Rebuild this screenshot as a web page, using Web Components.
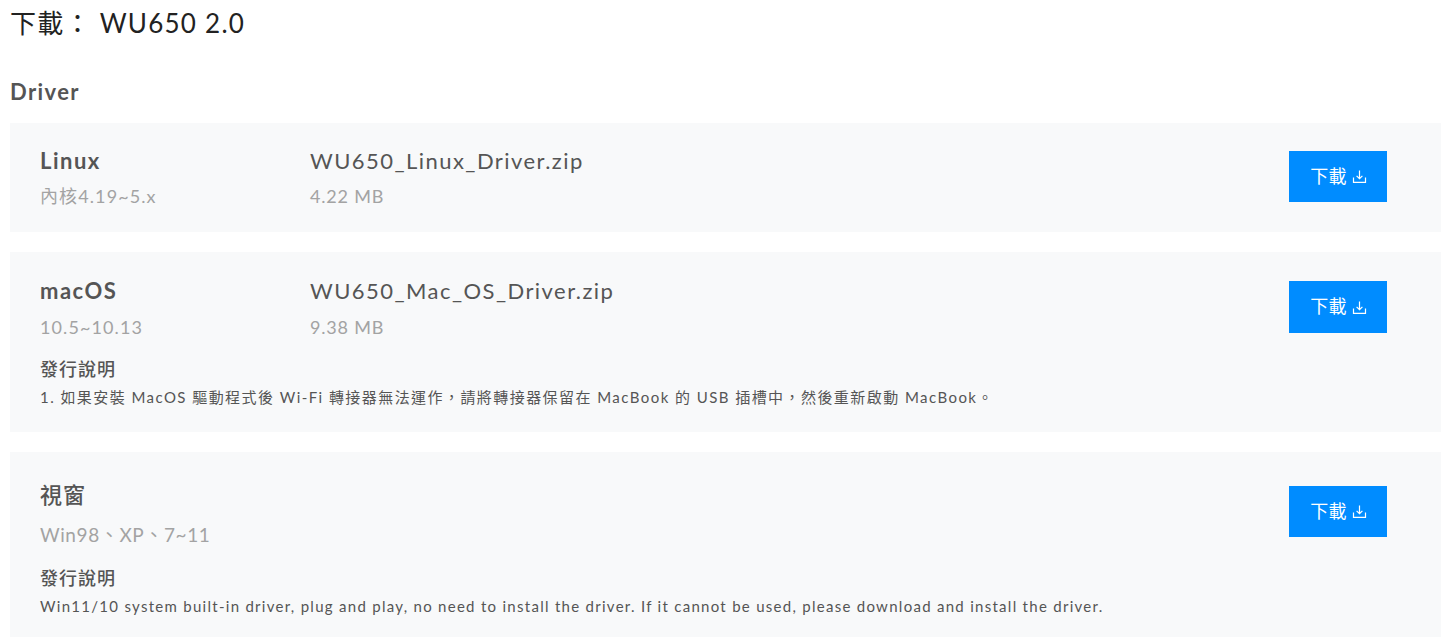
<!DOCTYPE html>
<html lang="zh-Hant">
<head>
<meta charset="utf-8">
<title>WU650 2.0</title>
<style>
    html, body { margin: 0; background: #fff; overflow: hidden; }
    body { font-family: Lato, "Noto Sans CJK TC", sans-serif; }
</style>
</head>
<body>
<download-page>
    <driver-card name="Linux" sub="內核4.19~5.x" file="WU650_Linux_Driver.zip" size="4.22 MB" style="--card-h:109px;--pad:27px;--btn-top:1px"></driver-card>
    <driver-card name="macOS" sub="10.5~10.13" file="WU650_Mac_OS_Driver.zip" size="9.38 MB" style="--card-h:180px;--btn-top:1px;--btn-h:52px;--sub-gap:15px;--note-ls:1.44px"
        note="1. 如果安裝 MacOS 驅動程式後 Wi-Fi 轉接器無法運作&#xFF0C;請將轉接器保留在 MacBook 的 USB 插槽中&#xFF0C;然後重新啟動 MacBook。"></driver-card>
    <driver-card name="視窗" sub="Win98、XP、7~11" style="--card-h:190px;--btn-top:6px;--note-gap:23px" big
        note="Win11/10 system built-in driver, plug and play, no need to install the driver. If it cannot be used, please download and install the driver."></driver-card>
</download-page>

<script>
class DownloadButton extends HTMLElement {
    constructor() {
        super();
        this.__shadowRoot = this.attachShadow({mode: 'open'});
    }

    connectedCallback() {
        this.__shadowRoot.innerHTML = `
        <style>
        :host { display: block; }
        a {
            display: flex;
            align-items: center;
            justify-content: center;
            gap: 5px;
            box-sizing: border-box;
            width: 98px;
            height: var(--btn-h, 51px);
            padding-left: 1px;
            background-color: #008cff;
            color: #fff;
            font-size: 18px;
            letter-spacing: .2px;
            text-decoration: none;
            cursor: pointer;
        }
        span { margin-bottom: 4px; }
        svg { width: 15px; height: 15px; }
        </style>
        <a href="#"><span>下載</span>
            <svg viewBox="0 0 15 15" fill="none" stroke="#fff" stroke-width="1.2">
                <path d="M7.5 1.5v8M4.6 6.8l2.9 2.9 2.9-2.9"/>
                <path d="M1.5 8.5v4.9h12V8.5"/>
            </svg>
        </a>
        `;
    }
}

class DriverCard extends HTMLElement {
    constructor() {
        super();
        this.__shadowRoot = this.attachShadow({mode: 'open'});
    }

    connectedCallback() {
        this.render();
    }

    render() {
        const attr = (key) => this.getAttribute(key);
        const file = attr('file') ? `
            <div class="file">
                <div class="file-name">${attr('file')}</div>
                <div class="sub">${attr('size')}</div>
            </div>` : '';
        const note = attr('note') ? `
            <div class="note">
                <div class="note-title">發行說明</div>
                <div class="note-text">${attr('note')}</div>
            </div>` : '';

        this.__shadowRoot.innerHTML = `
        <style>
        :host {
            display: block;
            box-sizing: border-box;
            height: var(--card-h);
            margin-bottom: 20px;
            padding: var(--pad, 28px) 54px 0 30px;
            background-color: #f8f9fa;
            color: #555;
        }
        .top { display: flex; align-items: flex-start; }
        .info { width: 270px; }
        .file { flex: 1; }
        .name { font-size: 22px; font-weight: 700; line-height: 22px; letter-spacing: 1.5px; }
        .sub { margin-top: var(--sub-gap, 14px); font-size: 18px; line-height: 20px; color: #a3a3a3; letter-spacing: 1.1px; }
        .file .sub { letter-spacing: .8px; }
        .file-name { font-size: 22px; line-height: 22px; letter-spacing: 1.45px; }
        download-button { margin: var(--btn-top, 0) 0 0 auto; }
        .note { margin-top: var(--note-gap, 22px); }
        .note-title { font-size: 18px; font-weight: 500; line-height: 20px; letter-spacing: 1px; }
        .note-text { margin-top: 8px; font-size: 15px; line-height: 20px; letter-spacing: var(--note-ls, 1.28px); white-space: nowrap; }
        :host([big]) .name { font-weight: 500; font-size: 22px; line-height: 30px; letter-spacing: 1px; }
        :host([big]) .sub { margin-top: 15px; font-size: 19px; letter-spacing: .6px; }
        </style>
        <div class="top">
            <div class="info">
                <div class="name">${attr('name')}</div>
                <div class="sub">${attr('sub')}</div>
            </div>
            ${file}
            <download-button></download-button>
        </div>
        ${note}
        `;
    }
}

class DownloadPage extends HTMLElement {
    constructor() {
        super();
        this.__shadowRoot = this.attachShadow({mode: 'open'});
    }

    connectedCallback() {
        this.__shadowRoot.innerHTML = `
        <style>
        :host { display: block; padding: 6px 0 0 10px; }
        h1 { margin: 0; font-size: 26px; font-weight: 400; line-height: 34px; color: #222; letter-spacing: 1.25px; }
        h2 { margin: 38px 0 17px; font-size: 22px; font-weight: 700; line-height: 28px; color: #555; letter-spacing: 1.4px; }
        </style>
        <h1>下載&#xFF1A; WU650 2.0</h1>
        <h2>Driver</h2>
        <slot></slot>
        `;
    }
}

customElements.define('download-button', DownloadButton);
customElements.define('driver-card', DriverCard);
customElements.define('download-page', DownloadPage);
</script>
</body>
</html>
